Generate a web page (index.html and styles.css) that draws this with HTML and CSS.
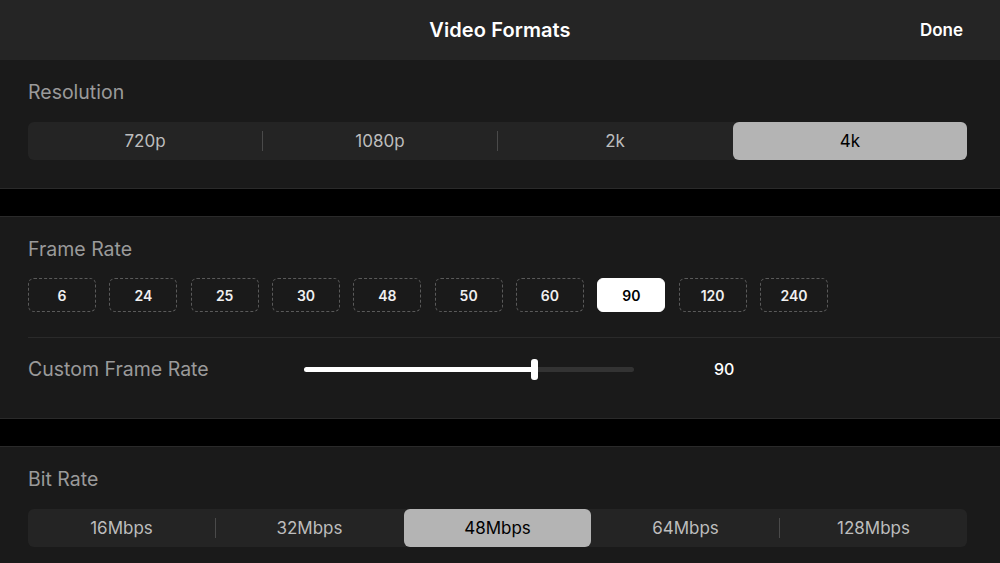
FILE: index.html
```html
<!DOCTYPE html>
<html>
<head>
<meta charset="utf-8">
<link rel="stylesheet" href="styles.css">
</head>
<body>
<div class="app">
  <header class="topbar">
    <div class="title">Video Formats</div>
    <div class="done">Done</div>
  </header>

  <section class="section first">
    <div class="label">Resolution</div>
    <div class="seg seg4">
      <div class="seg-item">720p</div>
      <div class="sep"></div>
      <div class="seg-item">1080p</div>
      <div class="sep"></div>
      <div class="seg-item">2k</div>
      <div class="sep hidden"></div>
      <div class="seg-item active">4k</div>
    </div>
  </section>

  <div class="spacer"></div>

  <section class="section">
    <div class="label">Frame Rate</div>
    <div class="chips">
      <div class="chip">6</div>
      <div class="chip">24</div>
      <div class="chip">25</div>
      <div class="chip">30</div>
      <div class="chip">48</div>
      <div class="chip">50</div>
      <div class="chip">60</div>
      <div class="chip active">90</div>
      <div class="chip">120</div>
      <div class="chip">240</div>
    </div>
    <div class="divider"></div>
    <div class="custom-row">
      <div class="row-label">Custom Frame Rate</div>
      <div class="slider">
        <div class="track">
          <div class="fill" style="width:70%"></div>
          <div class="thumb" style="left:70%"></div>
        </div>
      </div>
      <div class="value">90</div>
    </div>
  </section>

  <div class="spacer"></div>

  <section class="section last">
    <div class="label">Bit Rate</div>
    <div class="seg seg5">
      <div class="seg-item">16Mbps</div>
      <div class="sep"></div>
      <div class="seg-item">32Mbps</div>
      <div class="sep hidden"></div>
      <div class="seg-item active">48Mbps</div>
      <div class="sep hidden"></div>
      <div class="seg-item">64Mbps</div>
      <div class="sep"></div>
      <div class="seg-item">128Mbps</div>
    </div>
  </section>
</div>
</body>
</html>
```

FILE: styles.css
```css
* { box-sizing: border-box; }
html, body {
  margin: 0;
  padding: 0;
  background: #000;
  font-family: Inter, "Noto Sans", "Liberation Sans", sans-serif;
  overflow: hidden;
}
.app {
  width: 1000px;
  height: 563px;
  display: flex;
  flex-direction: column;
  background: #000;
}
.topbar {
  height: 60px;
  background: #252525;
  display: flex;
  align-items: center;
  justify-content: center;
  position: relative;
  flex: none;
}
.title {
  color: #fff;
  font-size: 20px;
  font-weight: 600;
  letter-spacing: 0.1px;
}
.done {
  position: absolute;
  right: 37px;
  top: 0;
  height: 60px;
  display: flex;
  align-items: center;
  color: #fff;
  font-size: 17px;
  font-weight: 600;
}
.section {
  background: #1a1a1a;
  border-top: 1px solid #2a2a2a;
  border-bottom: 1px solid #2a2a2a;
  padding: 20px 0 0 28px;
  flex: none;
}
.section.first {
  border-top: none;
  padding-bottom: 28px;
}
.section.last {
  border-bottom: none;
  flex: 1;
}
.spacer {
  height: 27px;
  background: #000;
  flex: none;
}
.label {
  color: #9a9a9a;
  font-size: 19.5px;
  line-height: 24px;
  height: 24px;
}
.seg {
  margin-top: 18px;
  width: 939px;
  height: 38px;
  background: #242424;
  border-radius: 6px;
  display: flex;
  align-items: center;
}
.seg-item {
  flex: 1;
  height: 38px;
  display: flex;
  align-items: center;
  justify-content: center;
  color: #bdbdbd;
  font-size: 17px;
}
.seg-item.active {
  background: #b4b4b4;
  color: #000;
  border-radius: 6px;
}
.sep {
  width: 1px;
  height: 20px;
  background: #4a4a4a;
  flex: none;
}
.sep.hidden { background: transparent; }
.chips {
  margin-top: 17px;
  display: flex;
  gap: 13.33px;
}
.chip {
  width: 68px;
  height: 34px;
  border: 1px dashed #5a5a5a;
  border-radius: 6px;
  display: flex;
  align-items: center;
  justify-content: center;
  color: #f0f0f0;
  font-size: 14px;
  font-weight: 600;
}
.chip.active {
  background: #fff;
  border: 1px solid #fff;
  color: #000;
}
.divider {
  margin-top: 25px;
  height: 1px;
  background: #2a2a2a;
}
.custom-row {
  height: 62px;
  margin-bottom: 18px;
  display: flex;
  align-items: center;
}
.row-label {
  width: 276px;
  color: #9a9a9a;
  font-size: 19.5px;
}
.slider {
  width: 330px;
  height: 20px;
  display: flex;
  align-items: center;
}
.track {
  position: relative;
  width: 100%;
  height: 5px;
  border-radius: 3px;
  background: #333;
}
.fill {
  height: 100%;
  background: #fff;
  border-radius: 3px;
}
.thumb {
  position: absolute;
  top: -8px;
  width: 7px;
  height: 21px;
  margin-left: -4px;
  background: #fff;
  border-radius: 3px;
}
.value {
  margin-left: 80px;
  color: #fff;
  font-size: 16px;
  font-weight: 500;
}
```
